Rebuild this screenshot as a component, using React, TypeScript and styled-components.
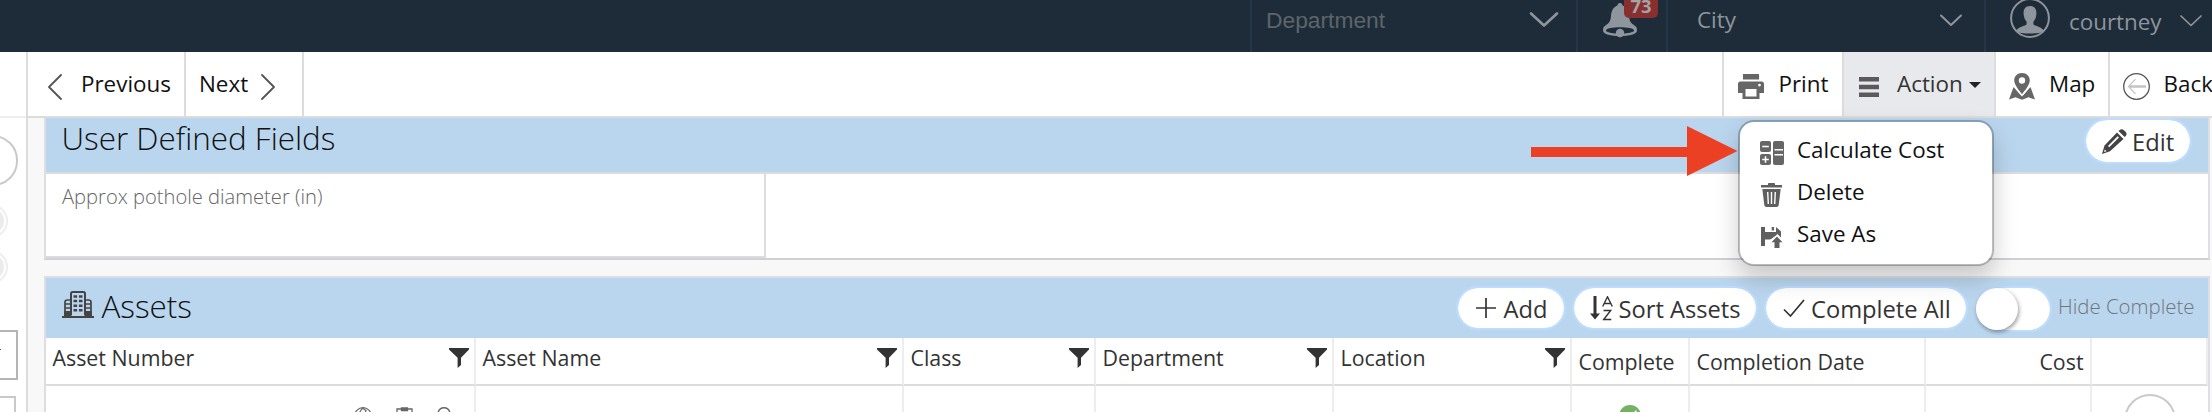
import React from "react";
import styled, { createGlobalStyle } from "styled-components";

const Global = createGlobalStyle`
  * { box-sizing: border-box; }
  html, body { margin: 0; padding: 0; overflow: hidden; background: #f8f8f8; }
  body { font-family: "Open Sans", "Noto Sans", sans-serif; color: #111; }
  svg { display: block; flex: none; }
`;

const Page = styled.div`
  width: 2212px;
  height: 412px;
  display: flex;
  flex-direction: column;
  overflow: hidden;
  position: relative;
`;

const TopBar = styled.header`
  height: 52px;
  flex: none;
  display: flex;
  justify-content: flex-end;
  background: #1e2c39;
  color: #8e959c;
`;
const TopCell = styled.div<{ $w: number; $pad: number; $top: number }>`
  width: ${(p) => p.$w}px;
  height: 52px;
  flex: none;
  border-left: 2px solid #243747;
  padding: ${(p) => p.$top}px 0 0 ${(p) => p.$pad}px;
  display: flex;
  align-items: flex-start;
  position: relative;
`;
const TopLabel = styled.span<{ $w: number; $helvetica?: boolean; $top?: number }>`
  width: ${(p) => p.$w}px;
  flex: none;
  margin-top: ${(p) => p.$top ?? 0}px;
  font-size: ${(p) => (p.$helvetica ? 22.8 : 22.4)}px;
  font-family: ${(p) => (p.$helvetica ? '"Liberation Sans", Arial, sans-serif' : "inherit")};
  color: ${(p) => (p.$helvetica ? "#5d656b" : "inherit")};
  line-height: 30px;
`;
const Badge = styled.span`
  position: absolute;
  left: 46px;
  top: 0;
  width: 34px;
  height: 18px;
  border-radius: 0 0 5px 5px;
  background: #88302f;
  color: #a6a3a6;
  font-weight: 700;
  font-size: 18.5px;
  line-height: 12px;
  text-align: center;
`;

const Body = styled.div`
  flex: 1;
  min-height: 0;
  display: flex;
`;
const Side = styled.aside`
  width: 28px;
  flex: none;
  background: #fff;
  border-right: 2px solid #dcdcdc;
  overflow: hidden;
`;
const SideHead = styled.div`
  height: 66px;
  border-bottom: 2px solid #efefef;
`;
const SidePill = styled.div`
  width: 60px;
  height: 51px;
  margin: 17px 0 0 -42px;
  border: 2px solid #c9c9c9;
  border-radius: 25px;
`;
const SideRadio = styled.div<{ $top: number }>`
  width: 34px;
  height: 34px;
  margin: ${(p) => p.$top}px 0 0 -26px;
  border: 2px solid #eee;
  border-radius: 50%;
  padding: 2px;
  &::before {
    content: "";
    display: block;
    height: 26px;
    border-radius: 50%;
    background: #ebebeb;
  }
`;
const SideBox = styled.div<{ $w: number; $top: number; $c: string }>`
  width: ${(p) => p.$w}px;
  height: 50px;
  margin-top: ${(p) => p.$top}px;
  border: 2px solid ${(p) => p.$c};
  border-left: 0;
  padding-top: 17px;
`;

const Main = styled.main`
  flex: 1;
  min-width: 0;
  display: flex;
  flex-direction: column;
`;
const Toolbar = styled.nav`
  height: 66px;
  flex: none;
  display: flex;
  background: #fff;
  border-bottom: 2px solid #dcdcdc;
`;
const Spacer = styled.div`
  flex: 1;
`;
const Tool = styled.div<{ $w: number; $pad: number; $gap: number; $active?: boolean; $edge?: "left" | "right" }>`
  width: ${(p) => p.$w}px;
  flex: none;
  display: flex;
  align-items: center;
  gap: ${(p) => p.$gap}px;
  padding: 0 0 1px ${(p) => p.$pad}px;
  font-size: 22.4px;
  line-height: 30px;
  white-space: nowrap;
  color: ${(p) => (p.$active ? "#333" : "#111")};
  background: ${(p) => (p.$active ? "#e8e9ed" : "#fff")};
  border-${(p) => p.$edge ?? "left"}: 2px solid #dcdcdc;
  svg { margin-top: 6px; }
`;
const Caret = styled.i`
  border: 6px solid transparent;
  border-top-color: #222;
  border-bottom: 0;
  margin: 2px 0 0 -12px;
`;

const Card = styled.section<{ $gap?: number }>`
  width: 2166px;
  flex: none;
  margin: ${(p) => p.$gap ?? 0}px 0 0 16px;
  border: 2px solid #dddee4;
  border-top-width: ${(p) => (p.$gap ? 2 : 0)}px;
  border-bottom-color: #cfd0d4;
  background: #fff;
`;
const CardHead = styled.div<{ $h: number; $lift: number; $pad: number }>`
  height: ${(p) => p.$h}px;
  display: flex;
  align-items: center;
  padding-left: ${(p) => p.$pad}px;
  background: #bad6ee;
  h2 {
    margin: 0;
    padding-bottom: ${(p) => p.$lift}px;
    font-weight: 300;
    font-size: 31.4px;
    line-height: 40px;
  }
`;
const Pill = styled.button<{ $w: number; $h?: number; $pad: number; $gap: number; $end: number; $raise?: number }>`
  width: ${(p) => p.$w}px;
  height: ${(p) => p.$h ?? 44}px;
  margin: 0 ${(p) => p.$end}px ${(p) => p.$raise ?? 0}px 0;
  border: 2px solid #bddcff;
  border-radius: 23px;
  background: #fff;
  background-clip: padding-box;
  padding: 2px 0 0 ${(p) => p.$pad}px;
  display: flex;
  flex: none;
  align-items: center;
  gap: ${(p) => p.$gap}px;
  font: 400 23.7px/32px "Open Sans", sans-serif;
  color: #333;
  white-space: nowrap;
  svg { margin-top: -2px; }
`;
const Toggle = styled.div`
  width: 76px;
  height: 46px;
  margin: 2px 6px 0 0;
  border: 2px solid #bddcff;
  border-left: 0;
  border-radius: 23px;
  background: #fff;
  background-clip: padding-box;
  &::before {
    content: "";
    display: block;
    width: 42px;
    height: 42px;
    border-radius: 50%;
    background: #fff;
    box-shadow: 1px 2px 4px rgba(0, 0, 0, 0.4);
  }
`;
const ToggleLabel = styled.span`
  width: 150px;
  padding-bottom: 5px;
  font-weight: 300;
  font-size: 20.4px;
  line-height: 28px;
  color: #70757a;
`;

const Fields = styled.div`
  height: 86px;
  border-top: 2px solid #dcdcdc;
`;
const Field = styled.div`
  width: 720px;
  height: 84px;
  border: solid #dcdcdc;
  border-width: 0 2px 2px 0;
  padding: 8px 0 0 16px;
  font-weight: 300;
  font-size: 20.15px;
  line-height: 28px;
  color: #666;
`;

const Grid = styled.div`
  display: grid;
  grid-template-columns: 430px 428px 192px 238px 238px 118px 236px 166px 116px;
`;
const Head = styled.div<{ $low?: boolean; $right?: boolean }>`
  height: 48px;
  display: flex;
  align-items: center;
  justify-content: ${(p) => (p.$right ? "flex-end" : "space-between")};
  padding: ${(p) => (p.$low ? 2 : 0)}px ${(p) => (p.$right ? 6.5 : 5)}px ${(p) => (p.$low ? 0 : 7)}px 6.5px;
  border-right: 2px solid #ededed;
  border-bottom: 2px solid #dcdcdc;
  font-size: 21.35px;
  line-height: 30px;
  color: #333;
  white-space: nowrap;
  &:last-child { border-right: 0; }
`;
const Cell = styled.div<{ $pad?: number }>`
  height: 60px;
  display: flex;
  align-items: flex-start;
  gap: 24px;
  padding: 21px 0 0 ${(p) => p.$pad ?? 0}px;
  border-right: 2px solid #ededed;
  &:last-child { border-right: 0; padding-top: 8px; }
`;
const Dot = styled.div`
  width: 22px;
  height: 22px;
  margin-top: -2px;
  border-radius: 50%;
  background: #72b265;
  padding: 5px 0 0 6px;
`;
const Ring = styled.div`
  width: 52px;
  height: 52px;
  border: 2px solid #c9c9c9;
  border-radius: 50%;
`;

const Menu = styled.div`
  position: absolute;
  left: 1738px;
  top: 120px;
  width: 256px;
  height: 146px;
  padding: 7px 0 0 20px;
  border: 2px solid rgba(0, 0, 0, 0.25);
  border-radius: 16px;
  background: #fff;
  background-clip: padding-box;
  box-shadow: 0 12px 24px rgba(0, 0, 0, 0.2);
`;
const MenuItem = styled.div`
  height: 42px;
  display: grid;
  grid-template-columns: 24px auto;
  align-items: center;
  gap: 13px;
  font-size: 22.4px;
  line-height: 30px;
  svg { margin-top: 6px; }
`;
const Pointer = styled.svg`
  position: absolute;
  left: 1531px;
  top: 126px;
`;
const AvatarSlot = styled.div`
  width: 59px;
  flex: none;
  margin-top: -2px;
`;
const AssetTitle = styled.div`
  display: flex;
  align-items: center;
  gap: 7.5px;
  svg { margin-top: -7px; }
`;

const Chevron = ({ w, h, d, s, c }: { w: number; h: number; d: string; s: number; c: string }) => (
  <svg width={w} height={h} viewBox={`0 0 ${w} ${h}`} fill="none" stroke={c} strokeWidth={s} strokeLinecap="round" strokeLinejoin="round">
    <path d={d} />
  </svg>
);
const Funnel = () => (
  <svg width="20" height="22" viewBox="0 0 20 22" fill="#333">
    <path d="M0 1h20v1.6l-8 8.2V18l-3.4 3V10.8L0 2.6z" />
  </svg>
);
const Bell = () => (
  <svg width="36" height="36" viewBox="0 0 36 36" fill="#8e959c">
    <path d="M18 1c1.6 0 2.4 1 2.6 2.4C25 5 26.600 9 27 14c.4 5 1.800 7 5.500 9.500 2 1.300 2.500 2.500 2.500 5C35 32.500 27 34 18 34S1 32.500 1 28.500c0-2.500.5-3.700 2.500-5C7.200 21 8.600 19 9 14c.4-5 2-9 6.400-10.600C15.600 2 16.400 1 18 1z" />
    <path d="M4 28.500c0-2 7-3.200 14-3.200s14 1.200 14 3.200c0 1.300-4 2.500-9.500 3h-9c-5.500-.5-9.500-1.700-9.500-3z" fill="#1e2c39" />
    <circle cx="18" cy="31" r="4.200" />
  </svg>
);
const Avatar = () => (
  <svg width="40" height="40" viewBox="0 0 40 40" fill="#8e959c">
    <circle cx="20" cy="20" r="18.900" fill="none" stroke="#8e959c" strokeWidth="2" />
    <path d="M20 8c4.500 0 6.600 3 6.400 7.500-.2 4-1.400 6.500-3 8.200v2.600c1 2 9 2 10.600 7.200C30.500 35 27 35.500 20 35.500S9.500 35 6 33.500c1.600-5.200 9.600-5.200 10.600-7.200v-2.600c-1.600-1.700-2.800-4.200-3-8.200C13.400 11 15.500 8 20 8z" />
  </svg>
);
const Printer = () => (
  <svg width="26" height="25" viewBox="0 0 26 25" fill="#666">
    <path d="M5 0h16v5.500H5z" />
    <path fillRule="evenodd" d="M2.500 7.500h21A2.500 2.500 0 0 1 26 10v9h-4.500v6h-17v-6H0v-9a2.500 2.500 0 0 1 2.500-2.500zM7.500 15v7.500h11V15zM21.500 9.700a1.400 1.400 0 1 0 0 2.800 1.400 1.400 0 0 0 0-2.800z" />
  </svg>
);
const Bars = () => (
  <svg width="20" height="20" viewBox="0 0 20 20" fill="#5a5a5c">
    <path d="M0 0h20v4.500H0zM0 7.700h20v4.500H0zM0 15.400h20V20H0z" />
  </svg>
);
const MapPin = () => (
  <svg width="26" height="27" viewBox="0 0 26 27" fill="#666">
    <path d="M4.500 14 13 23.500 21.500 14 26 26.500l-6.500-2.300-6.500 2.600-6.500-2.600L0 26.500z" />
    <path d="M13 21.500C9.500 17.500 4.800 12 4.800 7.300M13 21.500c3.500-4 8.200-9.500 8.200-14.200" fill="none" stroke="#fff" strokeWidth="2.600" />
    <path fillRule="evenodd" d="M13 0c4.600 0 7.800 3.300 7.800 7.500C20.800 12.500 13 21 13 21S5.200 12.500 5.200 7.500C5.200 3.300 8.400 0 13 0zm0 4.300a3.200 3.200 0 1 0 0 6.400 3.200 3.200 0 0 0 0-6.400z" />
  </svg>
);
const BackIcon = () => (
  <svg width="27" height="27" viewBox="0 0 27 27" fill="none" strokeWidth="1.300">
    <circle cx="13.500" cy="13.500" r="12.800" stroke="#555" />
    <path d="M23 12.800H6.500M12.500 6.200l-7 7.300 7 7.300M6.500 14.200H23" stroke="#c4c4c4" strokeWidth="1.200" />
  </svg>
);
const Pencil = () => (
  <svg width="25" height="25" viewBox="0 0 25 25" fill="#444">
    <path fillRule="evenodd" d="M15 3.500 21.500 10 8 22.300 0 25l2.500-8.500zM15.600 7.200 6 17l1.200 1.200L17 8.600zM2.800 20.500l-.8 2.600 2.600-.8z" />
    <path d="m16.500 2 1.300-1.100c1-1 2.700-1 3.800 0l2.200 2.200c1 1 1 2.800 0 3.800L22.700 8z" />
  </svg>
);
const Building = () => (
  <svg width="32" height="27" viewBox="0 0 32 27" fill="none" stroke="#444">
    <path d="M9 24V2.800C9 1.500 9.700 1 10.800 1h10.400c1.100 0 1.800.5 1.800 1.800V24" strokeWidth="2" />
    <path d="M9 9H5.500C4 9 3 9.500 3 11v13M23 9h3.500c1.500 0 2.500.5 2.500 2v13M3 13h6M3 17h6M23 13h6M23 17h6" strokeWidth="1.700" />
    <path d="M0 26h32" strokeWidth="2" />
    <path d="M2 21.500h7.500M22.500 21.500H30M2 23.500h7.500M22.500 23.500H30" strokeWidth="3" />
    <path d="M11.500 5.500h3.600M16.900 5.500h3.600M11.500 10h3.600M16.900 10h3.600M11.500 14.700h3.600M16.900 14.700h3.600M11.500 19.300h3.600M16.900 19.300h3.600" strokeWidth="2.500" />
  </svg>
);
const Plus = () => (
  <svg width="20" height="20" viewBox="0 0 20 20" stroke="#333" strokeWidth="1.700">
    <path d="M10 0v20M0 10h20" />
  </svg>
);
const SortIcon = () => (
  <svg width="23" height="25" viewBox="0 0 23 25" fill="none" stroke="#333" strokeWidth="1.500">
    <path d="M5 0v19" strokeWidth="3" />
    <path d="M0 17.500h10L5 23.500z" fill="#333" stroke="none" />
    <path d="m12.700 10.500 4.800-9.700 4.800 9.700M14.300 7.500h6.400M13.500 14.500h7.200l-7 9h7.600" strokeWidth="1.400" />
  </svg>
);
const Check = () => (
  <svg width="22" height="19" viewBox="0 0 22 19" fill="none" stroke="#333" strokeWidth="1.700">
    <path d="m1 10.500 6.500 6.500L21 1" />
  </svg>
);
const Calc = () => (
  <svg width="24" height="24" viewBox="0 0 24 24" fill="#666">
    <rect width="11" height="11" rx="2" />
    <rect y="13" width="11" height="11" rx="2" />
    <rect x="13" width="11" height="24" rx="2" />
    <path d="M2.200 5.500h6.600M2.200 18.500h6.600M5.500 15.200v6.600M14.500 8.800H23M14.500 13.800H23" stroke="#fff" strokeWidth="1.500" />
  </svg>
);
const Trash = () => (
  <svg width="24" height="24" viewBox="0 0 24 24" fill="#5f5f5f">
    <path d="M1 2h7V.8C8 .3 8.300 0 8.800 0h5.400c.5 0 .8.3.8.8V2h7v2.500H1z" />
    <path d="M2.300 6h18.400l-2 16c-.2 1.300-1 2-2.200 2h-10c-1.200 0-2-.7-2.200-2z" />
    <path d="M7.700 9l.6 12M11.500 9v12M15.300 9l-.6 12" stroke="#fff" strokeWidth="1.400" />
  </svg>
);
const SaveAs = () => (
  <svg width="24" height="22" viewBox="0 0 24 22" fill="#5f5f5f">
    <path d="M1 1h4v5.500h11V1l5 4.500v6L17.300 8 10 13.500H5V20H1z" />
    <path d="M5 6h11.500v3L11 13H5z" />
    <path d="M11.700 1h2.300v3.500h-2.300z" />
    <path d="m17 10.500 5.500 5.800h-3V22h-5v-5.700h-3z" />
  </svg>
);
const Globe = () => (
  <svg width="18" height="18" viewBox="0 0 18 18" fill="none" stroke="#666" strokeWidth="1.200">
    <circle cx="9" cy="9" r="8.300" />
    <path d="M9 .7C4 5 4 13 9 17.300M9 1.500l3 2-1 3 3 2M1 9h16" />
  </svg>
);
const Clipboard = () => (
  <svg width="17" height="18" viewBox="0 0 17 18" fill="none" stroke="#666" strokeWidth="1.300">
    <path d="M1 2h15v15.300H1zM5.500 3.500V1h6v2.500z" />
  </svg>
);
const Loop = () => (
  <svg width="14" height="18" viewBox="0 0 14 18" fill="none" stroke="#666" strokeWidth="1.400">
    <path d="M1.200 5C2 2.500 4.200.8 7 .8S12 2.500 12.800 5v12H1.200z" />
  </svg>
);

export default function App() {
  return (
    <>
      <Global />
      <Page>
        <TopBar>
          <TopCell $w={326} $pad={14} $top={5}>
            <TopLabel $w={263} $helvetica>Department</TopLabel>
            <Chevron w={30} h={28} d="M2 8.500 15 20.500 28 8.500" s={2.600} c="#8e959c" />
          </TopCell>
          <TopCell $w={90} $pad={24} $top={2}>
            <Bell />
            <Badge>73</Badge>
          </TopCell>
          <TopCell $w={318} $pad={29} $top={4}>
            <TopLabel $w={242} $top={1}>City</TopLabel>
            <Chevron w={24} h={24} d="M2 11.500 12 21 22 11.500" s={2} c="#8e959c" />
          </TopCell>
          <TopCell $w={228} $pad={24} $top={0}>
            <AvatarSlot><Avatar /></AvatarSlot>
            <TopLabel $w={110} $top={7}>courtney</TopLabel>
            <Chevron w={24} h={30} d="M2 16 12 25.500 22 16" s={1.700} c="#8e959c" />
          </TopCell>
        </TopBar>
        <Body>
          <Side>
            <SideHead />
            <SidePill />
            <SideRadio $top={18} />
            <SideRadio $top={12} />
            <SideBox $w={18} $top={46} $c="#b5b5b5">
              <svg width="2" height="3" viewBox="0 0 2 3" fill="#555"><path d="M0 0h1v1H0z" /></svg>
            </SideBox>
            <SideBox $w={16} $top={16} $c="#c9c9c9" />
          </Side>
          <Main>
            <Toolbar>
              <Tool $w={158} $pad={20} $gap={19} $edge="right">
                <Chevron w={14} h={26} d="M13 1 1 13 13 25" s={1.800} c="#555" />
                Previous
              </Tool>
              <Tool $w={118} $pad={13} $gap={13} $edge="right">
                Next
                <Chevron w={14} h={26} d="M1 1 13 13 1 25" s={1.800} c="#555" />
              </Tool>
              <Spacer />
              <Tool $w={120} $pad={14} $gap={14.5}><Printer />Print</Tool>
              <Tool $w={152} $pad={15} $gap={18} $active><Bars />Action<Caret /></Tool>
              <Tool $w={114} $pad={13} $gap={14}><MapPin />Map</Tool>
              <Tool $w={104} $pad={13} $gap={13.5}><BackIcon />Back</Tool>
            </Toolbar>

            <Card>
              <CardHead $h={54} $lift={15} $pad={15.5}>
                <h2>User Defined Fields</h2>
                <Spacer />
                <Pill $w={108} $h={46} $pad={16} $gap={5} $end={16} $raise={8}><Pencil />Edit</Pill>
              </CardHead>
              <Fields>
                <Field>Approx pothole diameter (in)</Field>
              </Fields>
            </Card>

            <Card $gap={16}>
              <CardHead $h={60} $lift={5} $pad={16}>
                <AssetTitle><Building /><h2>Assets</h2></AssetTitle>
                <Spacer />
                <Pill $w={110} $pad={18} $gap={7.5} $end={6}><Plus />Add</Pill>
                <Pill $w={186} $pad={16} $gap={5.5} $end={6}><SortIcon />Sort Assets</Pill>
                <Pill $w={204} $pad={17} $gap={6} $end={8}><Check />Complete All</Pill>
                <Toggle />
                <ToggleLabel>Hide Complete</ToggleLabel>
              </CardHead>
              <Grid>
                <Head>Asset Number<Funnel /></Head>
                <Head>Asset Name<Funnel /></Head>
                <Head>Class<Funnel /></Head>
                <Head>Department<Funnel /></Head>
                <Head>Location<Funnel /></Head>
                <Head $low>Complete</Head>
                <Head $low>Completion Date</Head>
                <Head $low $right>Cost</Head>
                <Head />
                <Cell $pad={308}><Globe /><Clipboard /><Loop /></Cell>
                <Cell /><Cell /><Cell /><Cell />
                <Cell $pad={47}>
                  <Dot><Chevron w={12} h={10} d="M1 5l3.500 3.500L11 1" s={1.500} c="#fff" /></Dot>
                </Cell>
                <Cell /><Cell />
                <Cell $pad={32}><Ring /></Cell>
              </Grid>
            </Card>
          </Main>
        </Body>
        <Menu>
          <MenuItem><Calc />Calculate Cost</MenuItem>
          <MenuItem><Trash />Delete</MenuItem>
          <MenuItem><SaveAs />Save As</MenuItem>
        </Menu>
        <Pointer width="207" height="50" viewBox="0 0 207 50" fill="#eb4024">
          <path d="M0 21h156V0l50.500 25L156 50V31H0z" />
        </Pointer>
      </Page>
    </>
  );
}
